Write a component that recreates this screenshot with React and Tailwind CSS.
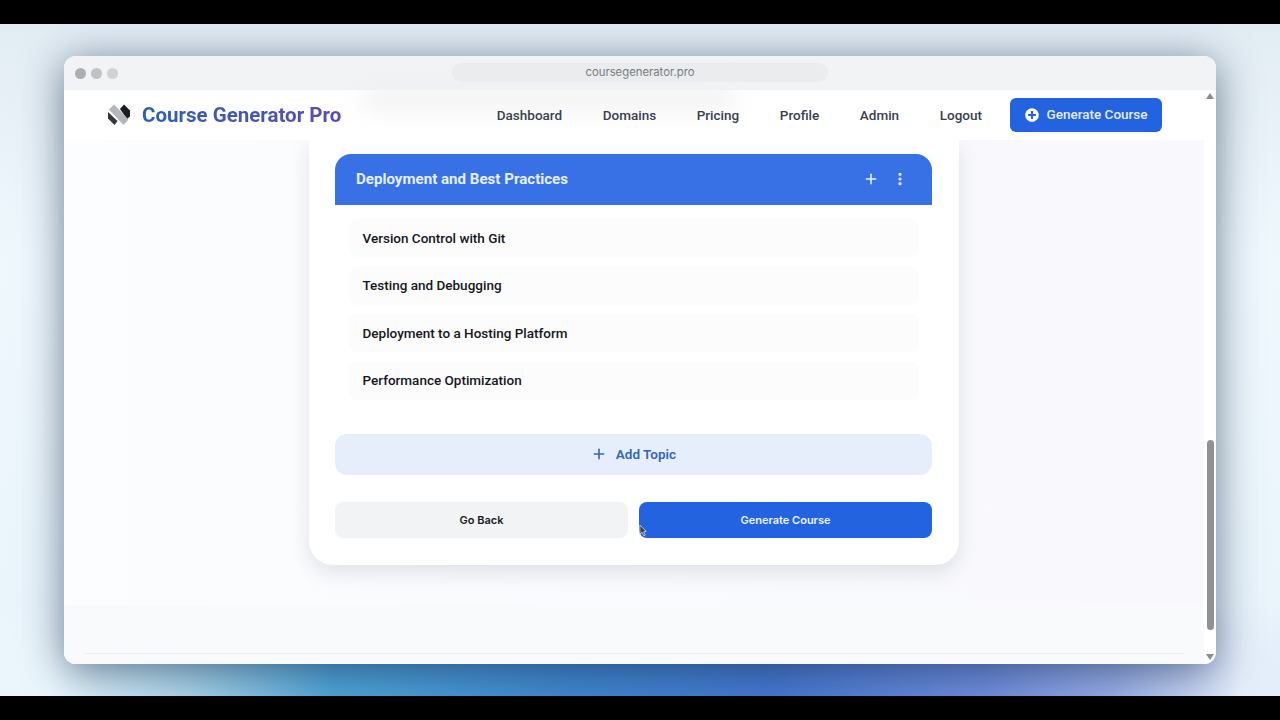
import { Plus, EllipsisVertical } from 'lucide-react'
import { FaPlusCircle } from 'react-icons/fa'

const navItems = ['Dashboard', 'Domains', 'Pricing', 'Profile', 'Admin', 'Logout']
const topics = [
  'Version Control with Git',
  'Testing and Debugging',
  'Deployment to a Hosting Platform',
  'Performance Optimization',
]

function Logo() {
  return (
    <svg viewBox="0 0 24 22" className="h-[22px] w-6">
      <path d="M1 8 V14.5 L7.5 21 L10.5 17 Z" fill="#34373b" />
      <path d="M13 5 L17 0.5 L23 6.5 V12.5 L20 15 Z" fill="#1b1d20" />
      <path d="M2 5.5 L7 0.5 L21.5 15.5 L16.5 21 Z" fill="#b3b6ba" />
    </svg>
  )
}

function Navbar() {
  return (
    <header className="relative flex h-[50px] shrink-0 items-center justify-between bg-white pl-[43px] pr-[42px]">
      <div className="absolute left-[300px] top-0 h-[18px] w-[370px] bg-[#eeeeef] blur-md" />
      <a href="#top" className="relative flex items-center gap-[11px]">
        <Logo />
        <span className="bg-linear-to-r from-[#2a5fb5] to-[#5a4bb4] bg-clip-text text-[20.5px] font-bold text-transparent">
          Course Generator Pro
        </span>
      </a>
      <nav className="relative flex items-center gap-7">
        <ul className="flex items-center gap-[40.6px]">
          {navItems.map((item) => (
            <li key={item} className="text-[13.5px] font-medium text-[#374151]">
              {item}
            </li>
          ))}
        </ul>
        <button
          type="button"
          className="flex h-[34px] w-[152px] items-center justify-center gap-2 rounded-md bg-[#2463e0] pb-px text-[13.5px] font-medium text-[#e8eefc]"
        >
          <FaPlusCircle className="h-[14px] w-[14px] text-white" />
          Generate Course
        </button>
      </nav>
    </header>
  )
}

function TopicCard() {
  return (
    <section className="flex w-[650px] flex-col rounded-b-3xl bg-white pb-[27px] pl-[26px] pr-[27px] pt-[14px] shadow-[0_8px_20px_rgba(40,50,70,0.12)]">
      <div className="flex h-[51px] items-center justify-between rounded-t-2xl bg-[#3870e6] pl-[21px] pr-6">
        <h2 className="text-[15.1px] font-bold text-[#e6f0fd]">Deployment and Best Practices</h2>
        <div className="mb-px flex items-center gap-[13px] text-[#e6f0fd]">
          <Plus className="h-4 w-4" strokeWidth={2.4} />
          <EllipsisVertical className="h-4 w-4" strokeWidth={2.8} />
        </div>
      </div>

      <ul className="ml-[14px] mr-[13px] mt-[14px] flex flex-col gap-[9.5px]">
        {topics.map((topic) => (
          <li key={topic} className="flex h-[38px] items-center rounded-lg bg-[#fcfcfd] pl-[13.5px] text-[13.5px] font-medium text-[#15171c]">
            {topic}
          </li>
        ))}
      </ul>

      <button
        type="button"
        className="mt-[34px] flex h-[41px] items-center justify-center gap-[9px] rounded-xl bg-[#e6eefb] text-[13.5px] font-semibold text-[#3566b5]"
      >
        <Plus className="h-4 w-4" strokeWidth={2.4} />
        Add Topic
      </button>

      <div className="mt-[27px] flex gap-[11px] font-['Inter',sans-serif] text-[11px] font-semibold">
        <button type="button" className="h-9 flex-1 rounded-lg bg-[#f1f3f5] pt-0.5 text-[#1a1c20]">
          Go Back
        </button>
        <button type="button" className="relative h-9 flex-1 rounded-lg bg-[#2463e0] pt-0.5 text-[#eef3fd]">
          Generate Course
          <svg viewBox="0 0 10 14" className="absolute left-0 top-[22px] h-[13px] w-[9px]">
            <path d="M1 1 L1 11 L3.5 9 L5.5 13 L7 12 L5 8.5 L8 8 Z" fill="#3a3f4a" stroke="#fff" strokeWidth="0.7" />
          </svg>
        </button>
      </div>
    </section>
  )
}

function Scrollbar() {
  return (
    <div className="flex w-3 shrink-0 flex-col items-center bg-white pb-[4px] pt-[3px]">
      <svg viewBox="0 0 8 6" className="h-[6px] w-2">
        <path d="M4 0 L8 6 H0 Z" fill="#8a8c90" />
      </svg>
      <div className="mt-auto h-[190px] w-[7px] rounded-full bg-[#8f9194]" />
      <svg viewBox="0 0 8 6" className="mt-[24px] h-[6px] w-2">
        <path d="M0 0 H8 L4 6 Z" fill="#8a8c90" />
      </svg>
    </div>
  )
}

export default function App() {
  return (
    <div className="flex h-[720px] w-[1280px] flex-col overflow-hidden bg-black font-['Roboto',sans-serif]">
      <div className="h-6 shrink-0 bg-black" />
      <div className="flex h-[672px] shrink-0 justify-center bg-[linear-gradient(180deg,#e2ecf3_0%,#eff8fd_35%,#e9f4fb_86%,rgba(233,244,251,0)_95%),linear-gradient(90deg,#eaf6fc_4%,#a8d4e8_15%,#4fa5d8_26%,#3f88d0_45%,#4478d0_60%,#6f8ddc_77%,#98ade6_87%,#e4edfa_97%)] pt-8">
        <div className="flex h-[608px] w-[1152px] flex-col overflow-hidden rounded-xl bg-white shadow-[0_6px_42px_rgba(25,45,80,0.62)]">
          <div className="flex h-[34px] shrink-0 items-center bg-[#f1f3f5] pl-[11px]">
            <div className="flex gap-[5px]">
              <span className="h-[11px] w-[11px] rounded-full bg-[#abaeb2]" />
              <span className="h-[11px] w-[11px] rounded-full bg-[#c0c3c6]" />
              <span className="h-[11px] w-[11px] rounded-full bg-[#d0d3d5]" />
            </div>
            <div className="mb-[1px] ml-[334px] flex h-[19px] w-[376px] items-center justify-center rounded-full bg-[#eaecee] font-['Inter',sans-serif] text-[11.3px] text-[#6f7479]">
              coursegenerator.pro
            </div>
          </div>
          <div className="flex min-h-0 flex-1">
            <div className="flex min-w-0 flex-1 flex-col bg-linear-to-r from-[#fbfdfe] to-[#f8f8fd]">
              <Navbar />
              <main className="flex justify-center">
                <TopicCard />
              </main>
              <footer className="mt-auto h-[59px] bg-[#f9fafb] px-5 pb-[10px]">
                <div className="h-full border-b border-[#eceef0]" />
              </footer>
            </div>
            <Scrollbar />
          </div>
        </div>
      </div>
      <div className="h-6 shrink-0 bg-black" />
    </div>
  )
}
